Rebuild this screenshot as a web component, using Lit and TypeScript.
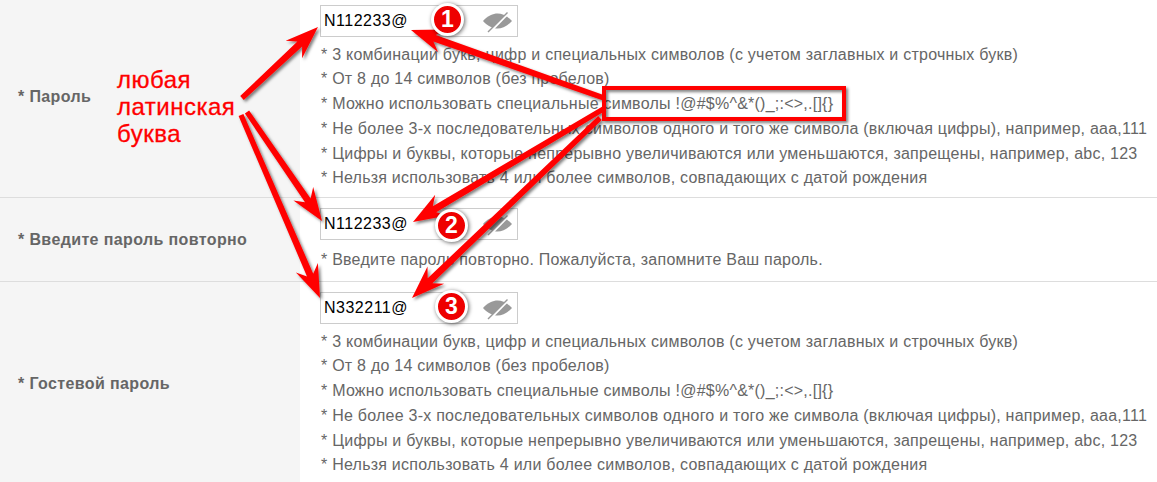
import { LitElement, html, css, svg } from "lit";
import { customElement } from "lit/decorators.js";

const RULES = [
  "* 3 комбинации букв, цифр и специальных символов (с учетом заглавных и строчных букв)",
  "* От 8 до 14 символов (без пробелов)",
  "* Можно использовать специальные символы !@#$%^&*()_;:<>,.[]{}",
  "* Не более 3-х последовательных символов одного и того же символа (включая цифры), например, aaa,111",
  "* Цифры и буквы, которые непрерывно увеличиваются или уменьшаются, запрещены, например, abc, 123",
  "* Нельзя использовать 4 или более символов, совпадающих с датой рождения",
];

type Arrow = [number, number, number, number];
const ARROWS: Arrow[] = [
  [242, 98, 318, 27],
  [247, 112, 322, 221],
  [241, 115, 320, 298],
  [604, 98, 411, 30],
  [605, 108, 413, 222],
  [600, 118, 412, 298],
];

function arrowPoints([x0, y0, x1, y1]: Arrow): string {
  const dx = x1 - x0, dy = y1 - y0;
  const len = Math.hypot(dx, dy);
  const ux = dx / len, uy = dy / len, nx = -uy, ny = ux;
  const at = (along: number, side: number) =>
    `${(x1 - ux * along + nx * side).toFixed(1)},${(y1 - uy * along + ny * side).toFixed(1)}`;
  return [
    at(0, 0),
    at(33, 12),
    at(25, 3.4),
    at(len, 2.6),
    at(len, -2.6),
    at(25, -3.4),
    at(33, -12),
  ].join(" ");
}

@customElement("app-root")
export class AppRoot extends LitElement {
  static styles = css`
    :host {
      display: block;
      position: relative;
      width: 1157px;
      height: 482px;
      overflow: hidden;
      background: #fff;
      font-family: "Liberation Sans", Arial, sans-serif;
    }
    .row {
      display: flex;
      border-bottom: 1px solid #ddd;
      box-sizing: border-box;
    }
    .r1 { height: 198px; }
    .r2 { height: 84px; }
    .r3 { height: 210px; }
    .label {
      flex: 0 0 300px;
      box-sizing: border-box;
      padding-left: 18px;
      background: #f5f5f5;
      display: flex;
      align-items: center;
      font-size: 16px;
      letter-spacing: 0.38px;
      font-weight: bold;
      color: #666;
    }
    .r1 .label { padding-bottom: 3px; }
    .r3 .label { padding-bottom: 6px; }
    .body {
      flex: 1;
      padding: 10px 0 0 20px;
    }
    .r1 .body { padding-top: 5px; }
    .input {
      width: 198px;
      height: 32px;
      box-sizing: border-box;
      border: 1px solid #ccc;
      display: flex;
      align-items: center;
      justify-content: space-between;
      padding: 0 0 0 3px;
      font-size: 16px;
      letter-spacing: 0.5px;
      color: #000;
      background: #fff;
    }
    .eye {
      width: 32px;
      height: 22px;
      margin-right: 3px;
      overflow: visible;
    }
    .hints {
      margin: 5.5px 0 0 1px;
      font-size: 16px;
      letter-spacing: 0.24px;
      line-height: 24.8px;
      color: #666;
      white-space: nowrap;
    }
    .r2 .hints { margin-top: 8px; }
    .overlay {
      position: absolute;
      inset: 0;
      width: 1157px;
      height: 482px;
      pointer-events: none;
    }
    .note {
      position: absolute;
      left: 117px;
      top: 66px;
      font-size: 24px;
      line-height: 27px;
      letter-spacing: 0.5px;
      color: #f00;
      -webkit-text-stroke: 0.3px #f00;
    }
    .badge {
      position: absolute;
      width: 27px;
      height: 27px;
      box-sizing: content-box;
      border: 3px solid #fff;
      border-radius: 50%;
      background: #ee0000;
      color: #fff;
      font-size: 23px;
      font-weight: bold;
      line-height: 27px;
      text-align: center;
      box-shadow: 1px 1px 4px rgba(0, 0, 0, 0.6);
    }
    .b1 { left: 431px; top: 3px; }
    .b2 { left: 435px; top: 209px; }
    .b3 { left: 435px; top: 290px; }
  `;

  private eye() {
    return html`<svg class="eye" viewBox="0 0 32 22">
      <path d="M1 11C6 5.500 11 3.500 15.500 3.500S25 5.500 30 11C25 16.500 20 18.500 15.500 18.500S6 16.500 1 11Z" fill="#999" />
      <path d="M7.500 22.500L26.500 3" stroke="#fff" stroke-width="2.500" />
      <path d="M6 22L25.500 2.500" stroke="#999" stroke-width="1.500" />
    </svg>`;
  }

  private row(cls: string, label: string, value: string, hints: string[]) {
    return html`<div class="row ${cls}">
      <div class="label">* ${label}</div>
      <div class="body">
        <div class="input"><span>${value}</span>${this.eye()}</div>
        <div class="hints">${hints.map((h) => html`<div>${h}</div>`)}</div>
      </div>
    </div>`;
  }

  render() {
    return html`
      ${this.row("r1", "Пароль", "N112233@", RULES)}
      ${this.row("r2", "Введите пароль повторно", "N112233@", [
        "* Введите пароль повторно. Пожалуйста, запомните Ваш пароль.",
      ])}
      ${this.row("r3", "Гостевой пароль", "N332211@", RULES)}
      <svg class="overlay" viewBox="0 0 1157 482">
        <defs>
          <filter id="sh" x="-20%" y="-20%" width="140%" height="140%">
            <feDropShadow dx="2" dy="2" stdDeviation="1.500" flood-color="#000" flood-opacity="0.5" />
          </filter>
        </defs>
        <g filter="url(#sh)">
          ${ARROWS.map((a) => svg`<polygon points=${arrowPoints(a)} fill="#f00" />`)}
          <rect x="604" y="88" width="240" height="31" fill="none" stroke="#f00" stroke-width="4" />
        </g>
      </svg>
      <div class="note">любая<br />латинская<br />буква</div>
      <div class="badge b1">1</div>
      <div class="badge b2">2</div>
      <div class="badge b3">3</div>
    `;
  }
}
